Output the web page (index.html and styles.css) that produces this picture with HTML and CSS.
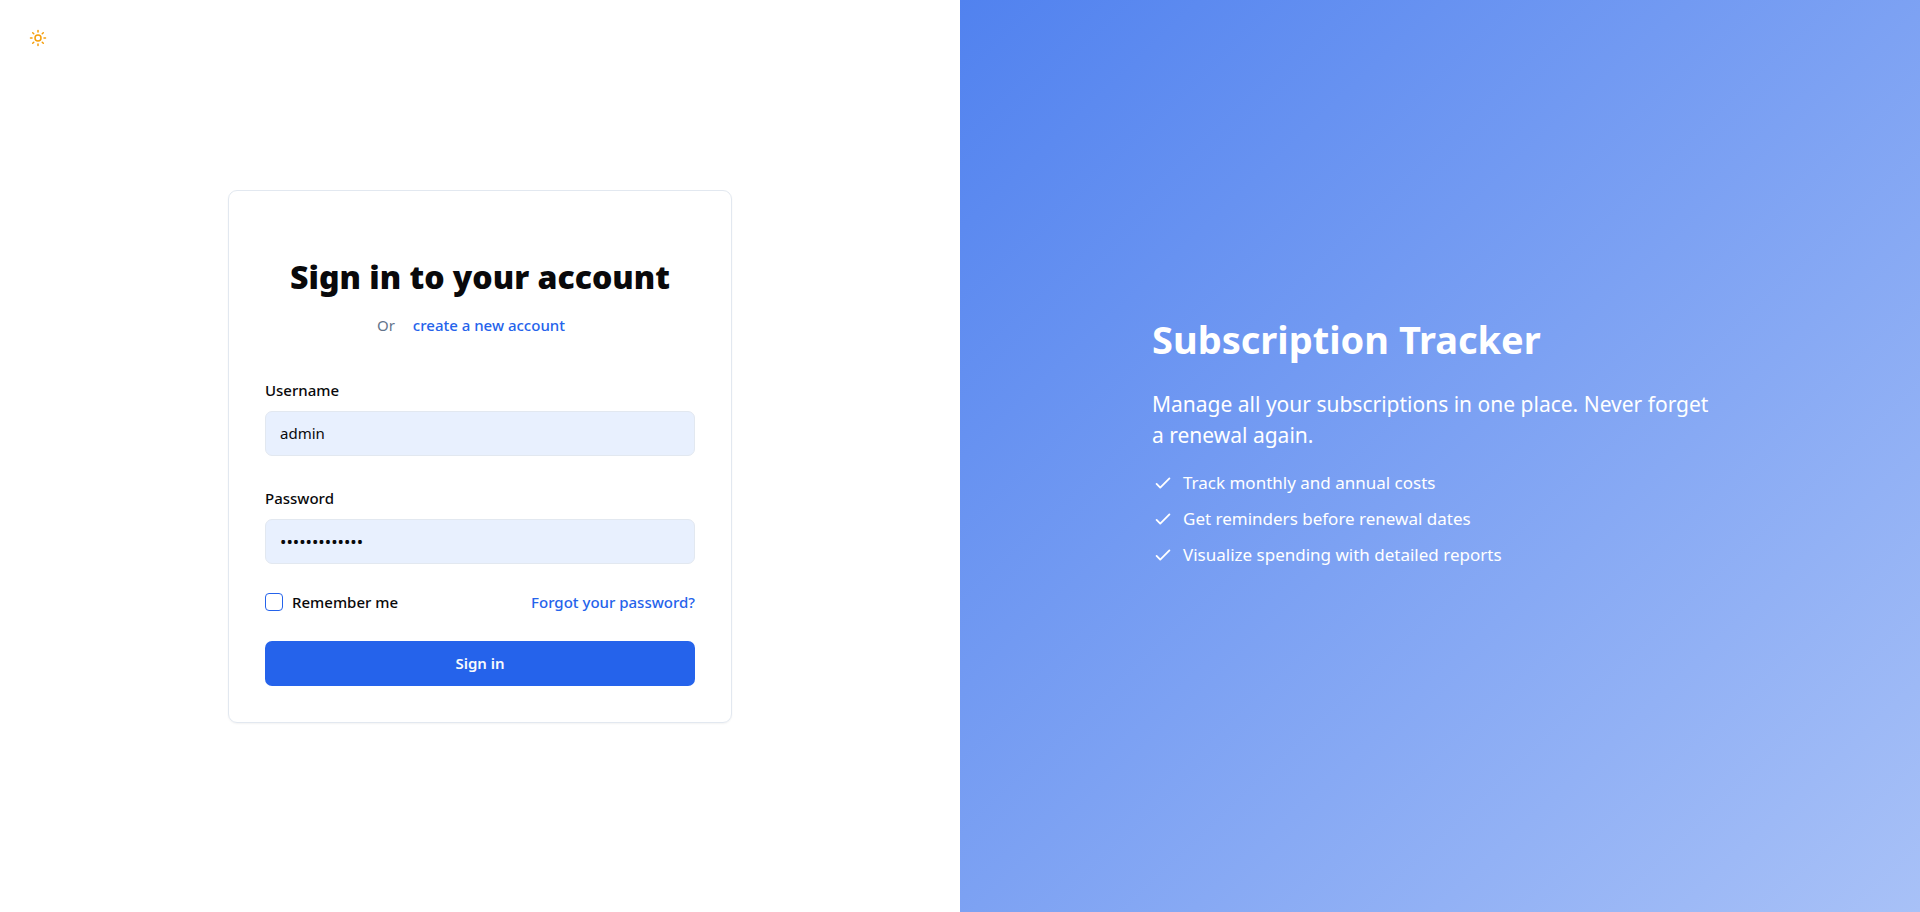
FILE: index.html
```html
<!DOCTYPE html>
<html lang="en">
<head>
<meta charset="utf-8">
<meta name="viewport" content="width=device-width, initial-scale=1">
<title>Sign in - Subscription Tracker</title>
<link rel="stylesheet" href="styles.css">
</head>
<body>
<div class="page">
  <main class="auth">
    <header class="toolbar">
      <button class="theme-toggle" type="button" aria-label="Toggle theme">
        <svg viewBox="0 0 24 24" aria-hidden="true"><circle cx="12" cy="12" r="4"/><path d="M12 2v2M12 20v2M4.93 4.93l1.41 1.41M17.66 17.66l1.41 1.41M2 12h2M20 12h2M6.34 17.66l-1.41 1.41M19.07 4.93l-1.41 1.41"/></svg>
      </button>
    </header>
    <section class="card">
      <h2 class="card-title">Sign in to your account</h2>
      <p class="card-hint">Or <a class="link hint-link" href="#register">create a new account</a></p>
      <form class="form">
        <div class="fields">
          <div class="field">
            <label class="label" for="username">Username</label>
            <input class="input" id="username" type="text" value="admin" autocomplete="username">
          </div>
          <div class="field">
            <label class="label" for="password">Password</label>
            <input class="input input-password" id="password" type="password" value="adminpassword" autocomplete="current-password">
          </div>
        </div>
        <div class="options">
          <div class="remember">
            <input class="checkbox" id="remember" type="checkbox">
            <label class="label" for="remember">Remember me</label>
          </div>
          <a class="link" href="#forgot">Forgot your password?</a>
        </div>
        <button class="submit" type="submit">Sign in</button>
      </form>
    </section>
  </main>
  <aside class="promo">
    <div class="promo-content">
      <h1 class="promo-title">Subscription Tracker</h1>
      <p class="promo-text">Manage all your subscriptions in one place. Never forget a renewal again.</p>
      <ul class="features">
        <li class="feature"><svg class="check" viewBox="0 0 24 24" aria-hidden="true"><path d="M5 13l4 4L19 7"/></svg>Track monthly and annual costs</li>
        <li class="feature"><svg class="check" viewBox="0 0 24 24" aria-hidden="true"><path d="M5 13l4 4L19 7"/></svg>Get reminders before renewal dates</li>
        <li class="feature"><svg class="check" viewBox="0 0 24 24" aria-hidden="true"><path d="M5 13l4 4L19 7"/></svg>Visualize spending with detailed reports</li>
      </ul>
    </div>
  </aside>
</div>
</body>
</html>
```
FILE: styles.css
```css
* { box-sizing: border-box; }

body {
  margin: 0;
  background: #fff;
  color: #09090b;
  font-family: "Segoe UI", "Noto Sans", sans-serif;
  font-size: 15px;
  line-height: 23px;
}

h1, h2, p, ul { margin: 0; padding: 0; }

.page {
  display: grid;
  grid-template-columns: 1fr 1fr;
  min-height: 100vh;
}

.auth {
  display: grid;
  grid-template-rows: 1fr auto 1fr;
  justify-items: center;
  padding: 18px;
}

.toolbar { justify-self: start; }

.theme-toggle {
  display: grid;
  place-items: center;
  width: 40px;
  height: 40px;
  padding: 0;
  border: 0;
  background: transparent;
  color: #f59e0b;
}

.theme-toggle svg {
  width: 18px;
  height: 18px;
  fill: none;
  stroke: currentColor;
  stroke-width: 2;
  stroke-linecap: round;
  stroke-linejoin: round;
}

.card {
  width: 100%;
  max-width: 504px;
  padding: 66px 36px 36px;
  border: 1px solid #e2e8f0;
  border-radius: 9px;
  box-shadow: 0 1px 2px rgba(0, 0, 0, 0.05);
}

.card-title {
  font-size: 32px;
  line-height: 40px;
  font-weight: 900;
  text-align: center;
}

.card-hint {
  margin-top: 17px;
  color: #64748b;
  text-align: center;
}

.link {
  color: #2563eb;
  font-weight: 500;
  text-decoration: none;
}

.hint-link { padding: 0 18px 0 14px; }

.form {
  display: flex;
  flex-direction: column;
  gap: 27px;
  margin-top: 42px;
}

.fields {
  display: grid;
  gap: 31px;
}

.field {
  display: flex;
  flex-direction: column;
  gap: 9px;
}

.label { font-weight: 500; }

.input {
  width: 100%;
  height: 45px;
  padding: 0 14px;
  border: 1px solid #e2e8f0;
  border-radius: 7px;
  background: #e8f0fe;
  color: #09090b;
  font: inherit;
}

.input-password { font-size: 17px; }

.options {
  display: flex;
  align-items: center;
  justify-content: space-between;
}

.remember {
  display: flex;
  align-items: center;
  gap: 9px;
}

.checkbox {
  appearance: none;
  width: 18px;
  height: 18px;
  margin: 0;
  border: 1px solid #2563eb;
  border-radius: 4px;
}

.checkbox:checked { background: #2563eb; }

.submit {
  height: 45px;
  border: 0;
  border-radius: 7px;
  background: #2563eb;
  color: #f8fafc;
  font: inherit;
  font-weight: 600;
}

.promo {
  display: grid;
  place-items: center;
  padding: 36px;
  background: linear-gradient(to bottom right, #5182ef, #a8c1f7);
  color: #fff;
}

.promo-content {
  width: 100%;
  max-width: 576px;
  padding-bottom: 27px;
}

.promo-title {
  font-size: 38px;
  line-height: 45px;
  font-weight: 700;
}

.promo-text {
  max-width: 567px;
  margin-top: 27px;
  font-size: 21px;
  line-height: 31px;
}

.features {
  display: grid;
  gap: 9px;
  margin-top: 18px;
  font-size: 17px;
  line-height: 27px;
  list-style: none;
}

.feature {
  display: flex;
  align-items: center;
  gap: 9px;
}

.check {
  width: 22px;
  height: 22px;
  fill: none;
  stroke: currentColor;
  stroke-width: 2;
  stroke-linecap: round;
  stroke-linejoin: round;
}
```
